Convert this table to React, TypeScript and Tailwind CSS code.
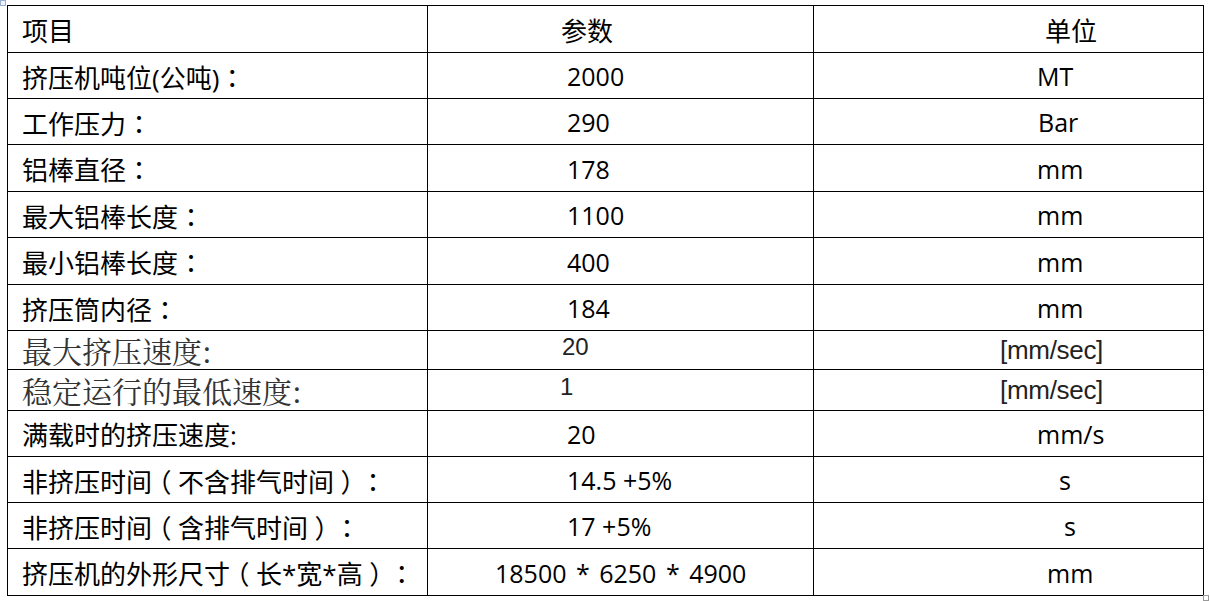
import React from "react";

type Row = {
  item: string;
  value: string;
  unit: string;
  h: string;
  valuePad: string;
  unitPad: string;
  serif?: boolean;
  wide?: boolean;
  head?: boolean;
};

const ROWS: Row[] = [
  { item: "项目", value: "参数", unit: "单位", h: "h-[47px]", valuePad: "pl-[133px]", unitPad: "pl-[231px]", head: true },
  { item: "挤压机吨位(公吨)：", value: "2000", unit: "MT", h: "h-[46px]", valuePad: "pl-[139px]", unitPad: "pl-[223px]" },
  { item: "工作压力：", value: "290", unit: "Bar", h: "h-[46px]", valuePad: "pl-[139px]", unitPad: "pl-[224px]" },
  { item: "铝棒直径：", value: "178", unit: "mm", h: "h-[47px]", valuePad: "pl-[139px]", unitPad: "pl-[223px]" },
  { item: "最大铝棒长度：", value: "1100", unit: "mm", h: "h-[46px]", valuePad: "pl-[139px]", unitPad: "pl-[223px]" },
  { item: "最小铝棒长度：", value: "400", unit: "mm", h: "h-[47px]", valuePad: "pl-[139px]", unitPad: "pl-[223px]" },
  { item: "挤压筒内径：", value: "184", unit: "mm", h: "h-[46px]", valuePad: "pl-[139px]", unitPad: "pl-[223px]" },
  { item: "最大挤压速度:", value: "20", unit: "[mm/sec]", h: "h-[39px]", valuePad: "pl-[134px]", unitPad: "pl-[186px]", serif: true },
  { item: "稳定运行的最低速度:", value: "1", unit: "[mm/sec]", h: "h-[41px]", valuePad: "pl-[132px]", unitPad: "pl-[186px]", serif: true },
  { item: "满载时的挤压速度:", value: "20", unit: "mm/s", h: "h-[46px]", valuePad: "pl-[139px]", unitPad: "pl-[223px]" },
  { item: "非挤压时间（不含排气时间）：", value: "14.5 +5%", unit: "s", h: "h-[46px]", valuePad: "pl-[139px]", unitPad: "pl-[245px]" },
  { item: "非挤压时间（含排气时间）：", value: "17 +5%", unit: "s", h: "h-[46px]", valuePad: "pl-[139px]", unitPad: "pl-[250px]" },
  { item: "挤压机的外形尺寸（长*宽*高）：", value: "18500 * 6250 * 4900", unit: "mm", h: "h-[47px]", valuePad: "pl-[67px]", unitPad: "pl-[233px]", wide: true },
];

const sansFam =
  "font-['Open_Sans','Noto_Sans_CJK_SC','Microsoft_YaHei',sans-serif] [text-spacing-trim:space-all]";

// YaHei draws full-width colon and brackets centred in their em box
function Label({ text }: { text: string }) {
  const parts = text.split(/([：（）])/);
  return (
    <>
      {parts.map((p, i) => {
        if (p === "：")
          return (
            <span key={i} className="font-['Noto_Sans_CJK_TC',sans-serif]">
              ：
            </span>
          );
        if (p === "（" || p === "）")
          return (
            <span key={i} className="[font-feature-settings:'halt'] mx-[6.5px]">
              {p}
            </span>
          );
        return <React.Fragment key={i}>{p}</React.Fragment>;
      })}
    </>
  );
}

export default function App() {
  return (
    <div className="relative w-[1210px] h-[601px] bg-white overflow-hidden pt-[5px] pl-[7px]">
      {/* word table handles */}
      <div className="absolute left-0 top-0 w-[6px] h-[6px] border border-[#9bb0d0] bg-[#eef2fa]" />
      <div className="absolute left-[1203px] top-[595px] w-[6px] h-[6px] border border-[#999] bg-white" />

      <table className="border-collapse table-fixed w-[1196px] text-black">
        <colgroup>
          <col className="w-[420px]" />
          <col className="w-[386px]" />
          <col className="w-[390px]" />
        </colgroup>
        <tbody>
          {ROWS.map((r) => (
            <tr key={r.item} className={r.h}>
              <td
                className={`border border-black p-0 pl-[14px] align-middle whitespace-nowrap leading-none ${
                  r.serif
                    ? "font-['Noto_Serif_CJK_SC','SimSun',serif] text-[30px] text-[#333]"
                    : `${sansFam} text-[26px] pt-[3px]`
                }`}
              >
                {r.serif ? r.item : <Label text={r.item} />}
              </td>
              <td
                className={`border border-black p-0 ${r.valuePad} align-middle whitespace-nowrap leading-none ${
                  r.serif
                    ? "font-['Liberation_Sans',Arial,sans-serif] text-[24px] text-[#222] pb-[6px]"
                    : `${sansFam} ${r.head ? "text-[26px] pt-[3px]" : "text-[25px] pt-[2px]"}`
                } ${r.wide ? "[word-spacing:3px]" : ""}`}
              >
                {r.value}
              </td>
              <td
                className={`border border-black p-0 ${r.unitPad} align-middle whitespace-nowrap leading-none ${
                  r.serif
                    ? "font-['Liberation_Sans',Arial,sans-serif] text-[26px] text-[#222] tracking-[-0.3px]"
                    : `${sansFam} ${r.head ? "text-[26px] pt-[3px]" : "text-[25px] pt-[2px]"}`
                }`}
              >
                {r.unit}
              </td>
            </tr>
          ))}
        </tbody>
      </table>
    </div>
  );
}
